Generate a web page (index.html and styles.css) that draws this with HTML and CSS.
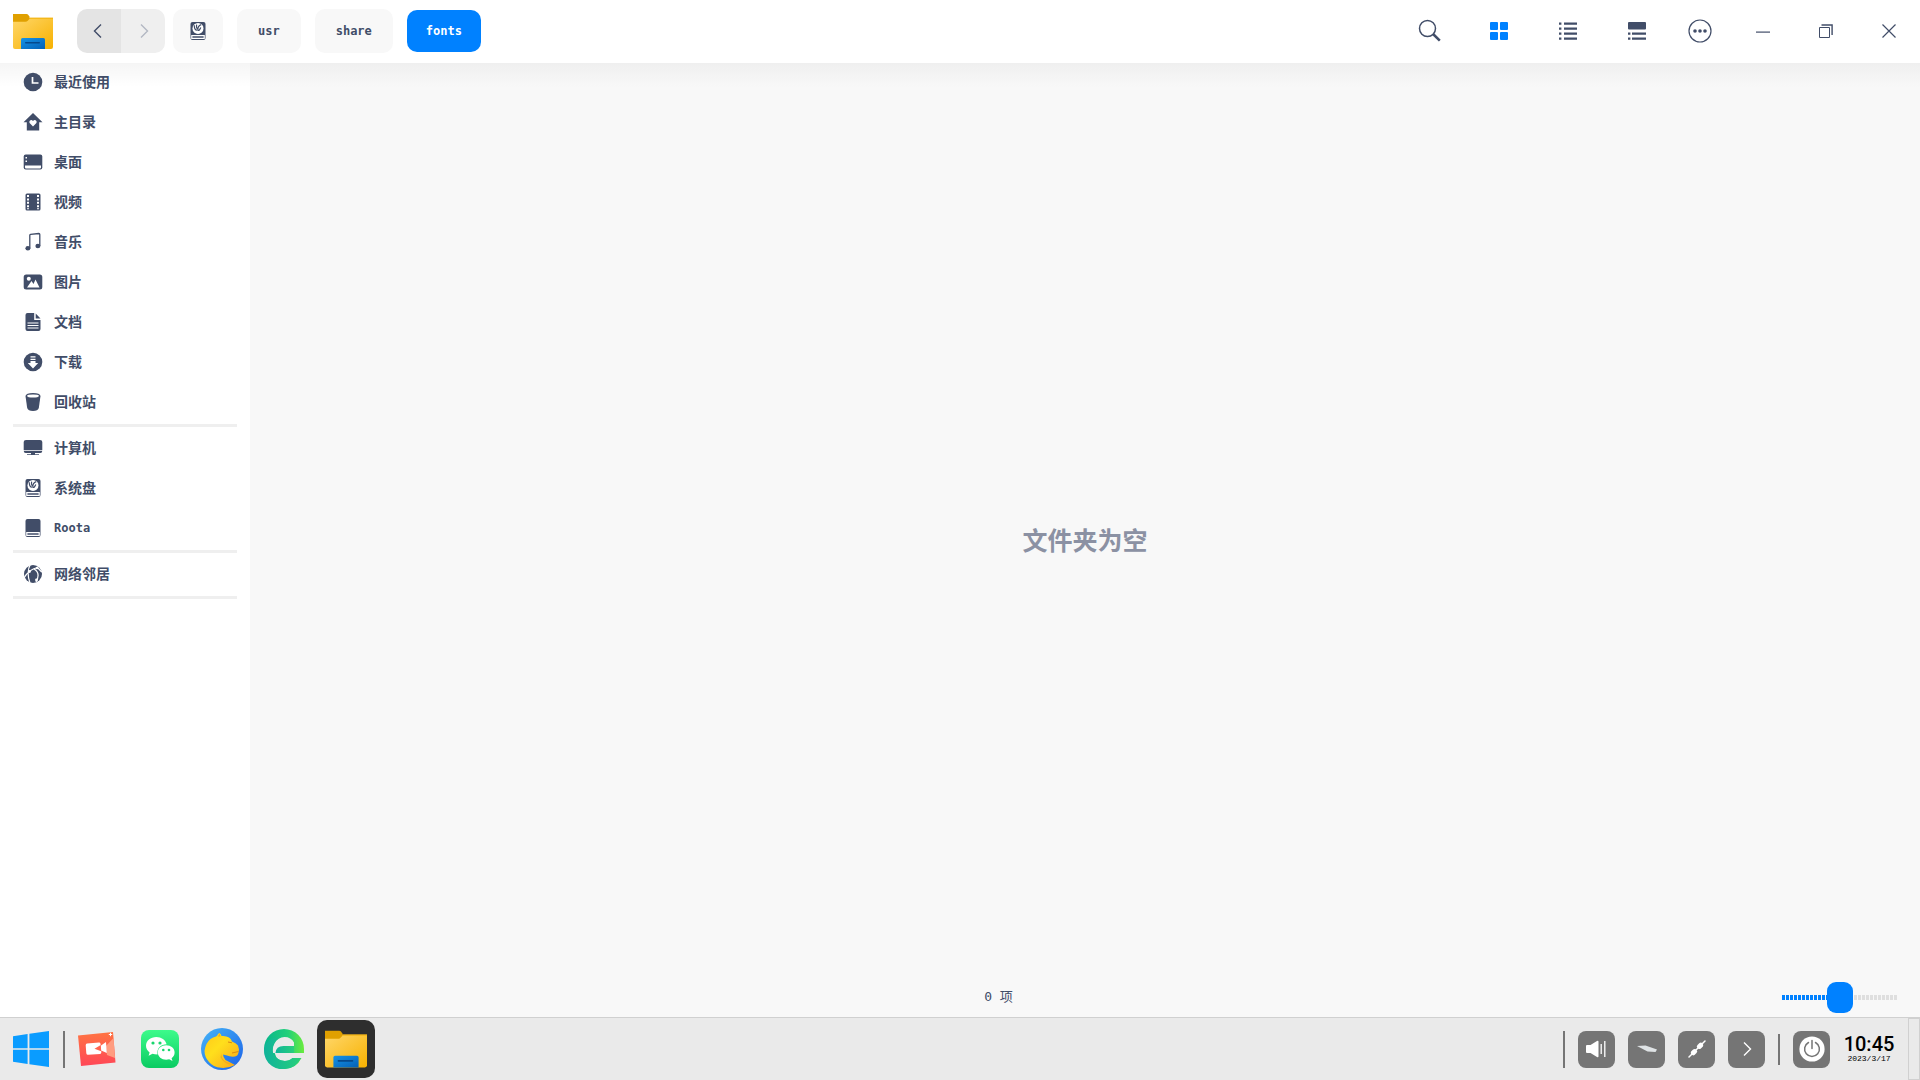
FILE: index.html
```html
<!DOCTYPE html>
<html lang="zh-CN">
<head>
  <meta charset="UTF-8" />
  <meta name="viewport" content="width=device-width, initial-scale=1.0" />
  <title>fonts</title>
  <link rel="stylesheet" href="styles.css">
</head>
<body>
  <svg class="defs" width="0" height="0" aria-hidden="true">
    <defs>
      <linearGradient id="gFolder" x1="0" y1="0" x2="1" y2="1">
        <stop offset="0" stop-color="#ffd76a"/><stop offset="1" stop-color="#f7b100"/>
      </linearGradient>
      <linearGradient id="gPocket" x1="0" y1="0" x2="1" y2="1">
        <stop offset="0" stop-color="#1593e6"/><stop offset="1" stop-color="#0560b6"/>
      </linearGradient>
      <linearGradient id="gRec" x1="0" y1="0" x2="0" y2="1">
        <stop offset="0" stop-color="#ff7443"/><stop offset="1" stop-color="#ff4757"/>
      </linearGradient>
      <linearGradient id="gChat" x1="0" y1="0" x2="0" y2="1">
        <stop offset="0" stop-color="#3dfb8b"/><stop offset="1" stop-color="#0acb62"/>
      </linearGradient>
      <linearGradient id="gBird" x1="0" y1="0" x2="1" y2="1">
        <stop offset="0" stop-color="#45b4f7"/><stop offset="1" stop-color="#1c62e8"/>
      </linearGradient>
      <linearGradient id="gLion" x1="0" y1="0" x2="1" y2="1">
        <stop offset="0" stop-color="#ffc81a"/><stop offset=".4" stop-color="#ffdf1c"/><stop offset="1" stop-color="#f9a51a"/>
      </linearGradient>
      <linearGradient id="gEdgeA" x1="0" y1="0" x2="1" y2="0">
        <stop offset="0" stop-color="#07b68d"/><stop offset=".6" stop-color="#22d07a"/><stop offset="1" stop-color="#6bec3c"/>
      </linearGradient>
      <linearGradient id="gEdgeB" x1="0" y1="0" x2="1" y2="0">
        <stop offset="0" stop-color="#10b39a"/><stop offset="1" stop-color="#27cf7c"/>
      </linearGradient>
      <symbol id="folder" viewBox="0 0 40 35">
        <path fill="url(#gFolder)" d="M0 4h40v29a2 2 0 0 1-2 2H2a2 2 0 0 1-2-2z"/>
        <path fill="#f3b411" d="M14 3.600h26v1.200H14z"/>
        <path fill="#e0a000" d="M0 0h13.500q1.200 0 1.900 1l1 1.600v2.400L14.500 7q-.8.800-2 .8H0z"/>
        <path fill="url(#gPocket)" d="M8 35V25.500Q8 24 9.500 24h21q1.500 0 1.500 1.500V35z"/>
        <rect x="12" y="28" width="15" height="1.600" rx=".8" fill="#06498c"/>
      </symbol>
      <symbol id="sysdisk" viewBox="0 0 20 20">
        <path fill="#414d68" d="M4.500 1h11q2 0 2 2v14q0 2-2 2h-11q-2 0-2-2V3q0-2 2-2z"/>
        <circle cx="10" cy="7.400" r="5.500" fill="#fff"/>
        <path fill="none" stroke="#414d68" stroke-width="1.200" d="M6.300 4.200q-.2 4 2.500 5.200M8.600 3.600q-.6 2.800.6 4.200M13.200 3.600Q9.500 5 9.800 9.200q1.600.8 3-2.600"/>
        <path fill="none" stroke="#fff" stroke-width="1.200" d="M3.800 14.600h12.400v2.800H3.800z"/>
      </symbol>
    </defs>
  </svg>

  <header class="titlebar">
    <svg class="app-logo" aria-hidden="true"><use href="#folder"/></svg>
    <div class="history">
      <button type="button" class="back" aria-label="后退"><svg width="14" height="14" viewBox="0 0 14 14"><path d="M9 .6 2.500 7l6.500 6.400"/></svg></button>
      <button type="button" class="forward" aria-label="前进"><svg width="14" height="14" viewBox="0 0 14 14"><path d="M5 .6 11.500 7 5 13.400"/></svg></button>
    </div>
    <nav class="crumbs">
      <button type="button" class="crumb crumb-disk" aria-label="系统盘"><svg width="20" height="20"><use href="#sysdisk"/></svg></button>
      <button type="button" class="crumb">usr</button>
      <button type="button" class="crumb">share</button>
      <button type="button" class="crumb current">fonts</button>
    </nav>
    <div class="tools">
      <button type="button" aria-label="搜索"><svg width="24" height="24" viewBox="0 0 24 24"><circle cx="9.500" cy="9.500" r="8" fill="none" stroke="#414d68" stroke-width="1.500"/><path fill="none" stroke="#414d68" stroke-width="2.600" d="m14.800 14.800 7 6.800"/></svg></button>
      <button type="button" aria-label="图标视图"><svg width="18" height="18" viewBox="0 0 18 18" fill="#0081ff"><rect width="8" height="8" rx="1"/><rect x="10" width="8" height="8" rx="1"/><rect y="10" width="8" height="8" rx="1"/><rect x="10" y="10" width="8" height="8" rx="1"/></svg></button>
      <button type="button" aria-label="列表视图"><svg width="18" height="18" viewBox="0 0 18 18" fill="#414d68"><path d="M0 .4h2.400v2.400H0zM5 .4h13v2.400H5zM0 5.400h2.400v2.400H0zM5 5.400h13v2.400H5zM0 10.400h2.400v2.400H0zM5 10.400h13v2.400H5zM0 15.400h2.400v2.400H0zM5 15.400h13v2.400H5z"/></svg></button>
      <button type="button" aria-label="详细视图"><svg width="18" height="18" viewBox="0 0 18 18" fill="#414d68"><rect width="18" height="7.500" rx="1"/><path d="M0 10.400h2.400v2.400H0zM4 10.400h14v2.400H4zM0 15.400h2.400v2.400H0zM4 15.400h14v2.400H4z"/></svg></button>
    </div>
    <div class="window-controls">
      <button type="button" aria-label="菜单"><svg width="24" height="24" viewBox="0 0 24 24" fill="#414d68"><circle cx="12" cy="12" r="11" fill="none" stroke="#414d68" stroke-width="1.200"/><circle cx="7" cy="12" r="1.800"/><circle cx="12" cy="12" r="1.800"/><circle cx="17" cy="12" r="1.800"/></svg></button>
      <button type="button" aria-label="最小化"><svg width="14" height="14" viewBox="0 0 14 14"><path fill="#414d68" d="M0 7.500h14v1.200H0z"/></svg></button>
      <button type="button" aria-label="还原"><svg width="14" height="14" viewBox="0 0 14 14" fill="none" stroke="#414d68"><path d="M.5 3.500h10v10H.5z"/><path d="M2.500 1h10.600v10" stroke-width="1.400"/></svg></button>
      <button type="button" aria-label="关闭"><svg width="14" height="14" viewBox="0 0 14 14"><path stroke="#414d68" stroke-width="1.200" d="m.5.500 13 13M13.500.500l-13 13"/></svg></button>
    </div>
  </header>

  <div class="content">
    <aside class="sidebar">
      <ul>
        <li><a href="#"><svg viewBox="0 0 20 20"><circle cx="10" cy="10" r="9.300"/><path fill="none" stroke="#fff" stroke-width="1.700" d="M9.500 5v6h6"/></svg>最近使用</a></li>
        <li><a href="#"><svg viewBox="0 0 20 20"><path d="m10 1 9.500 9.300h-3.300V18.500H3.800v-8.200H.500z"/><path fill="#fff" d="M10 14.600 6.600 11q-.8-1.500.4-2.500 1.600-1 3 .6 1.400-1.600 3-.6 1.200 1 .4 2.500z"/></svg>主目录</a></li>
        <li><a href="#"><svg viewBox="0 0 20 20"><rect x=".7" y="2.500" width="18.600" height="15" rx="2"/><path fill="#fff" d="M2.500 5h1.500v1.500H2.500zM2.500 8.500h1.500V10H2.500zM2 13.500h16v2q0 1-1 1H3q-1 0-1-1z"/></svg>桌面</a></li>
        <li><a href="#"><svg viewBox="0 0 20 20"><rect x="2.500" y="1.500" width="15" height="17" rx="1.500"/><path fill="#fff" d="M4 3h2v2H4zM4 6.400h2v2H4zM4 9.800h2v2H4zM4 13.200h2v2H4zM4 16.200h2v1H4zM14 3h2v2h-2zM14 6.400h2v2h-2zM14 9.800h2v2h-2zM14 13.200h2v2h-2zM14 16.200h2v1h-2z"/></svg>视频</a></li>
        <li><a href="#"><svg viewBox="0 0 20 20"><path fill="none" stroke="#414d68" stroke-width="1.300" d="M6.800 16V3.300q0-.8.800-1L15.800 1.500q1 0 1 1V14"/><ellipse cx="4.900" cy="16.300" rx="2.500" ry="2.300"/><ellipse cx="14.900" cy="14" rx="2.500" ry="2.300"/></svg>音乐</a></li>
        <li><a href="#"><svg viewBox="0 0 20 20"><rect x=".7" y="2.500" width="18.600" height="15" rx="2.500"/><circle cx="5.800" cy="6.700" r="2" fill="#fff"/><path fill="#fff" d="m4 15.500 4.500-6.500 2 3 2-4.500 4 8z"/></svg>图片</a></li>
        <li><a href="#"><svg viewBox="0 0 20 20"><path d="M4.500 1h6.700v7h6.300v9q0 2-2 2h-11q-2 0-2-2V3q0-2 2-2zM12.700 1.500l4.800 5h-4.800z"/><path stroke="#fff" stroke-width="1.200" d="M4.500 11h11M4.500 13.500h11M4.500 16h11"/></svg>文档</a></li>
        <li><a href="#"><svg viewBox="0 0 20 20"><circle cx="10" cy="10" r="9.300"/><path fill="#fff" d="M7.500 4.200h5v1.300h-5zM7.500 6.700h5V8h-5zM7.500 9h5v2h2.700L10 16.400 4.800 11h2.700z"/></svg>下载</a></li>
        <li><a href="#"><svg viewBox="0 0 20 20"><path d="M2.500 4Q3 1 10 1t7.500 3L15.800 16q-.8 3-5.800 3t-5.800-3z"/><ellipse cx="10" cy="4" rx="6" ry="1.600" fill="#fff"/></svg>回收站</a></li>
      </ul>
      <hr>
      <ul>
        <li><a href="#"><svg viewBox="0 0 20 20"><path d="M3 2h14q2.300 0 2.300 2v8H.7V4Q.7 2 3 2zM.7 12.700h18.600q0 2.200-2 2.200H12v1.300h4v.9H4v-.9h4v-1.300H2.700q-2 0-2-2.200z"/></svg>计算机</a></li>
        <li><a href="#"><svg><use href="#sysdisk"/></svg>系统盘</a></li>
        <li><a href="#" class="latin"><svg viewBox="0 0 20 20"><path d="M4.500 1h11q2 0 2 2v14q0 2-2 2h-11q-2 0-2-2V3q0-2 2-2z"/><path fill="none" stroke="#fff" stroke-width="1.200" d="M3.800 14.600h12.400v2.800H3.800z"/></svg>Roota</a></li>
      </ul>
      <hr>
      <ul>
        <li><a href="#"><svg viewBox="0 0 20 20"><circle cx="10" cy="10" r="9"/><path fill="none" stroke="#fff" stroke-width="1.200" d="M7.500 0Q3 8 7 19M1 14Q6 5 15 3.500M11 5q7 4 2 13M14 3q3.500 4 5 5"/><circle cx="6.500" cy="7.500" r="1.400" fill="#fff"/><circle cx="14" cy="4" r="1.300" fill="#fff"/><circle cx="13.500" cy="16" r="1.400" fill="#fff"/></svg>网络邻居</a></li>
      </ul>
      <hr>
    </aside>

    <main class="files">
      <p class="empty">文件夹为空</p>
      <div class="statusbar">
        <span class="count">0 项</span>
        <input type="range" min="0" max="100" value="50" aria-label="图标大小">
      </div>
    </main>
  </div>

  <footer class="taskbar">
    <button type="button" class="start" aria-label="开始"><svg width="36" height="36" viewBox="0 0 36 36" fill="#0a9cff"><path d="M0 5.200 14.600 3v14.200H0zM16.400 2.800 36 0v17.200H16.400zM0 18.800h14.600V33L0 30.800zM16.400 18.800H36V36l-19.600-2.800z"/></svg></button>
    <span class="divider"></span>
    <div class="apps">
      <button type="button" aria-label="录屏"><svg width="40" height="40" viewBox="0 0 40 40"><path fill="url(#gRec)" d="M0 6.500 35 3l2.500 30.500L3 37z"/><path fill="#ff9c80" d="m28 17 7.500-8 1.500 20-8-3z"/><path fill="#fff" d="M9 14.500 21 13.500q1.300 0 1.500 1.200l.2 2 5.300-3.700.8 11-5.600-2.600.1 2q0 1.400-1.300 1.600l-12 .8q-1.500 0-1.700-1.500l-.6-8q0-1.600 1.300-1.800z"/><path fill="#ff6450" d="m16.500 19.800 6.300-3.800.4 6.200z"/><path stroke="#fff" d="M32.500 3.800v3.400M30.800 5.500h3.400"/></svg></button>
      <button type="button" aria-label="微信"><svg width="38" height="38" viewBox="0 0 38 38"><rect width="38" height="38" rx="8" fill="url(#gChat)"/><path fill="#fff" d="M15.300 7C9.500 7 5 10.900 5 15.800c0 2.700 1.400 5 3.600 6.600l-1 3.300 3.900-2q2.300.7 5 .7C15.700 18 20 14.300 25.600 14.300 24.500 10 20.400 7 15.300 7z"/><path fill="#fff" d="M25.200 15.300c-4.700 0-8.400 3.100-8.400 7.200s3.700 7.200 8.400 7.200q1.600 0 3-.4l3.300 1.700-.9-2.800c1.900-1.400 3-3.300 3-5.700 0-4.100-3.700-7.200-8.400-7.200z"/><g fill="#18d66d"><circle cx="12" cy="13" r="1.600"/><circle cx="19" cy="13" r="1.600"/><circle cx="22.300" cy="20" r="1.300"/><circle cx="28" cy="20" r="1.300"/></g></svg></button>
      <button type="button" aria-label="浏览器"><svg width="42" height="42" viewBox="0 0 42 42"><circle cx="21" cy="21" r="21" fill="url(#gBird)"/><path fill="url(#gLion)" d="M15 8.500 Q16.500 7.500 17 6 L18.500 5 Q20 6 20.500 8 Q25 7.500 28 9.500 Q30 10.500 31 13.500 Q35 15 37 17.500 L38 21.500 L37.500 24.500 Q37 28 34 28.500 Q29 29 26 27.500 L22 26.500 Q22 29 24.500 32 L34 37 Q27 40.500 20 39.800 Q12 39 8 34 Q3.500 29 3.500 23 Q4.500 15 9.500 11 Q12 9 15 8.500z"/><path fill="#f7a91b" d="M21 25q-1.500 4 2.500 8L33 37q-11-1-13.500-8zM17 8.500l1.500-3 1 3z"/><path fill="none" stroke="#d98a12" d="m27 14 4 .8M37.500 23.500 31 25"/></svg></button>
      <button type="button" aria-label="网页浏览器"><svg width="40" height="40" viewBox="0 0 40 40"><path fill="url(#gEdgeA)" d="M40 24V20A20 20 0 1 0 20 40q12 0 17.500-11H28.500q-3 3-7.500 3-8.500 0-10.300-8h1.500z"/><path fill="#eaeaea" d="M9 24q-1-5 1.500-9.500Q14 8 20.500 8 27 8 30 13.500v4L11.500 24z"/><path fill="url(#gEdgeB)" d="M0 20q0 12 8 17 6 4 13 3 11-1 16-11h-8.500q-3 3-8 3Q10 31 8.500 22 8 14 15 8.500 3 8 0 20z"/><path fill="url(#gEdgeB)" d="M11.500 24q.5-7 8-7H30v7z"/></svg></button>
      <button type="button" class="active" aria-label="文件管理器"><svg width="42" height="38"><use href="#folder"/></svg></button>
    </div>

    <div class="tray">
      <span class="divider"></span>
      <button type="button" aria-label="音量"><svg width="21" height="18" viewBox="0 0 21 18"><path fill="#fff" d="M0 6q0-1 1-1h3.500L11 1q1.500-.8 1.500.8v14.400q0 1.600-1.500.8l-6.500-4H1q-1 0-1-1z"/><path stroke="#fff" stroke-width="1.300" d="M15.200 4v10M18.800 1v16"/></svg></button>
      <button type="button" aria-label="输入法"><svg width="20" height="10" viewBox="0 0 20 10"><path fill="#a3abb0" d="M0 2.400 10.500 8l8.500.4L20 5.500l-1 3-8.500-.4z"/><path fill="#dfe3e5" d="m0 2 8.500-.6L20 5.500l-1.500 2.500-8-.5z"/></svg></button>
      <button type="button" aria-label="网络"><svg width="18" height="18" viewBox="0 0 18 18"><path stroke="#fff" stroke-width="1.500" stroke-linecap="round" d="m1 17 16-16"/><path fill="#fff" d="m9.500 5 2-2q1.500-1 3 .4 1.400 1.500.4 3l-2 2q-1.800 1.200-3.400-.4T9.500 5zM8.500 13l-2 2q-1.500 1-3-.4-1.400-1.500-.4-3l2-2q1.800-1.200 3.400.4T8.500 13z"/></svg></button>
      <button type="button" aria-label="展开"><svg width="14" height="14" viewBox="0 0 14 14"><path fill="none" stroke="#fff" stroke-width="1.400" d="M4 .6 10.500 7 4 13.400"/></svg></button>
      <span class="divider short"></span>
      <button type="button" aria-label="电源"><svg width="26" height="26" viewBox="0 0 26 26"><circle cx="13" cy="13" r="12.600" fill="#fff"/><path fill="none" stroke="#757575" stroke-width="1.500" stroke-linecap="round" d="M9.500 6.500a7.400 7.400 0 1 0 7 0M13 4.500v8"/></svg></button>
      <time class="clock" datetime="2023-03-17T10:45"><strong>10:45</strong><span>2023/3/17</span></time>
      <button type="button" class="show-desktop" aria-label="显示桌面"></button>
    </div>
  </footer>
</body>
</html>
```

FILE: styles.css
```css
* {
  box-sizing: border-box;
}
body {
  margin: 0;
  height: 100vh;
  display: flex;
  flex-direction: column;
  background: #fff;
  color: #414d68;
  font-family: "DejaVu Sans Mono", "Noto Sans CJK SC", sans-serif;
  font-size: 12px;
  font-weight: bold;
  overflow: hidden;
}
button {
  border: 0;
  padding: 0;
  background: none;
  color: inherit;
  font: inherit;
  display: flex;
  align-items: center;
  justify-content: center;
}
.defs {
  position: absolute;
}

/* title bar */
.titlebar {
  flex: none;
  height: 63px;
  display: flex;
  align-items: center;
  padding: 0 9px 1px 13px;
}
.app-logo {
  width: 40px;
  height: 35px;
  margin-right: 24px;
}
.history {
  display: flex;
  margin-right: 8px;
  border-radius: 10px;
  overflow: hidden;
}
.history button {
  width: 44px;
  height: 44px;
  background: #efefef;
}
.history .back {
  background: #e4e4e4;
}
.history path {
  fill: none;
  stroke: #414d68;
  stroke-width: 1.4;
}
.history .forward path {
  stroke: #b3b8c3;
}
.crumbs {
  display: flex;
  align-items: center;
  gap: 14px;
}
.crumb {
  height: 44px;
  padding: 0 21px 1px;
  border-radius: 10px;
  background: #f8f8f8;
}
.crumb-disk {
  padding: 0 15px;
}
.crumb.current {
  height: 42px;
  padding: 0 19px 1px;
  background: #0081ff;
  color: #fff;
}
.tools {
  display: flex;
  gap: 24px;
  margin: 0 19px 0 auto;
}
.tools button {
  width: 45px;
  height: 44px;
}
.window-controls {
  display: flex;
  gap: 19px;
}
.window-controls button {
  width: 44px;
  height: 44px;
}

/* sidebar and file area */
.content {
  flex: 1;
  min-height: 0;
  display: flex;
  background: linear-gradient(#0000000a, #00000000) top / 100% 24px no-repeat;
}
.sidebar {
  width: 250px;
  flex: none;
}
.sidebar ul {
  margin: 0;
  padding: 0;
  list-style: none;
}
.sidebar a {
  display: flex;
  align-items: center;
  gap: 11px;
  height: 40px;
  padding: 0 0 2px 23px;
  color: inherit;
  text-decoration: none;
  font-size: 14px;
  line-height: 16px;
}
.sidebar .latin {
  font-size: 12px;
}
.sidebar svg {
  width: 20px;
  height: 20px;
  fill: #414d68;
}
.sidebar hr {
  height: 3px;
  margin: 1px 13px 2px;
  border: 0;
  background: #efefef;
}
.files {
  flex: 1;
  display: grid;
  grid-template-rows: 40px 1fr 40px;
  background: linear-gradient(#efefef, #f8f8f8 24px);
}
.empty {
  grid-row: 2;
  place-self: center;
  margin: 0;
  padding-bottom: 2px;
  font-size: 25px;
  color: #8b91a3;
}
.statusbar {
  grid-row: 3;
  display: flex;
  align-items: center;
}
.count {
  flex: 1;
  padding-bottom: 3px;
  text-align: center;
  font-size: 13px;
  font-weight: normal;
}
.statusbar input {
  appearance: none;
  width: 115px;
  height: 31px;
  margin: 0 23px 0 35px;
  background: none;
}
.statusbar input::-webkit-slider-runnable-track {
  height: 5px;
  background:
    repeating-linear-gradient(90deg, #0000 0 3px, #f8f8f8 3px 4px),
    linear-gradient(90deg, #0081ff 50%, #dfdfdf 50%);
}
.statusbar input::-webkit-slider-thumb {
  appearance: none;
  width: 26px;
  height: 31px;
  margin-top: -13px;
  border-radius: 9px;
  background: #0081ff;
}

/* taskbar */
.taskbar {
  flex: none;
  height: 63px;
  display: flex;
  align-items: center;
  padding-left: 13px;
  border-top: 1px solid #d0d0d0;
  background: #eaeaea;
}
.divider {
  width: 2px;
  height: 37px;
  background: #757575;
}
.divider.short {
  height: 31px;
}
.start {
  margin-right: 14px;
}
.apps {
  display: flex;
  gap: 4px;
  margin-left: 4px;
}
.apps button {
  width: 58px;
  height: 58px;
  border-radius: 10px;
}
.apps .active {
  background: #2e2e2e;
}
.tray {
  align-self: stretch;
  display: flex;
  align-items: center;
  gap: 13px;
  margin-left: auto;
}
.tray button {
  width: 37px;
  height: 37px;
  border-radius: 8px;
  background: #757575;
}
.clock {
  width: 52px;
  display: flex;
  flex-direction: column;
  align-items: center;
  color: #000;
}
.clock strong {
  font: 500 20px/20px Roboto, sans-serif;
}
.clock span {
  font: 8px/10px "Liberation Mono", monospace;
}
.tray .show-desktop {
  align-self: stretch;
  width: 12px;
  height: auto;
  border: 1px solid #d0d0d0;
  border-radius: 0;
  background: #eaeaea;
}
```
